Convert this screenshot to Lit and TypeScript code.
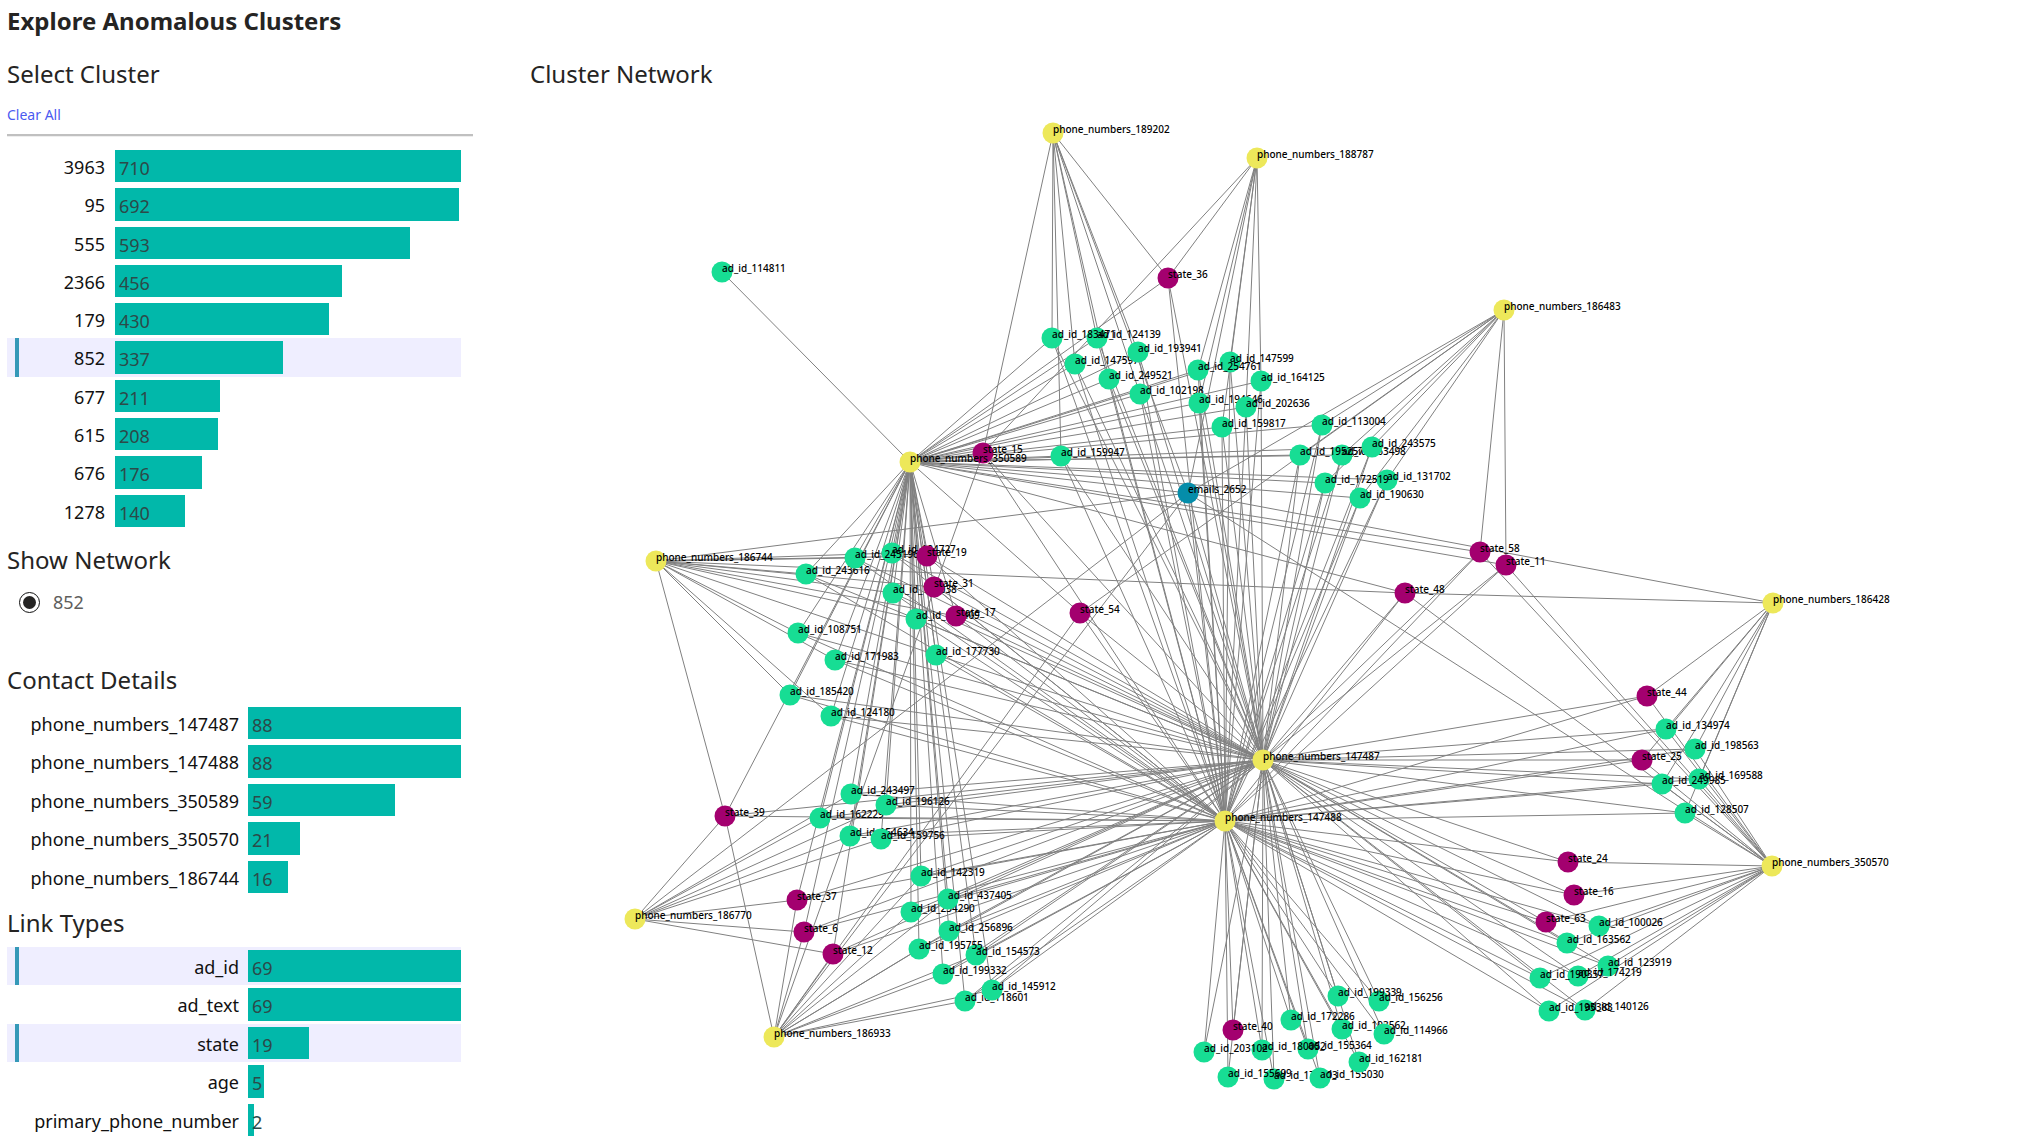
import { LitElement, html, svg, css } from "lit";
import { customElement, property, state } from "lit/decorators.js";
import { classMap } from "lit/directives/class-map.js";
import { styleMap } from "lit/directives/style-map.js";

type Bar = { label: string; value: number };
type Kind = "phone" | "ad" | "state" | "email";
type GraphNode = { id: string; kind: Kind; x: number; y: number };

const CLUSTERS: Bar[] = [
  { label: "3963", value: 710 },
  { label: "95", value: 692 },
  { label: "555", value: 593 },
  { label: "2366", value: 456 },
  { label: "179", value: 430 },
  { label: "852", value: 337 },
  { label: "677", value: 211 },
  { label: "615", value: 208 },
  { label: "676", value: 176 },
  { label: "1278", value: 140 },
];

const CONTACTS: Bar[] = [
  { label: "phone_numbers_147487", value: 88 },
  { label: "phone_numbers_147488", value: 88 },
  { label: "phone_numbers_350589", value: 59 },
  { label: "phone_numbers_350570", value: 21 },
  { label: "phone_numbers_186744", value: 16 },
];

const LINK_TYPES: Bar[] = [
  { label: "ad_id", value: 69 },
  { label: "ad_text", value: 69 },
  { label: "state", value: 19 },
  { label: "age", value: 5 },
  { label: "primary_phone_number", value: 2 },
];

const PREFIX: Record<Kind, string> = {
  phone: "phone_numbers_",
  ad: "ad_id_",
  state: "state_",
  email: "emails_",
};

const make = (kind: Kind, rows: [string, number, number][]): GraphNode[] =>
  rows.map(([n, x, y]) => ({ id: PREFIX[kind] + n, kind, x, y }));

/* Ads are grouped by the contact they share; later nodes paint over earlier ones. */
const TOP_ADS = make("ad", [
  ["124139", 1097, 337],
  ["183471", 1052, 337],
  ["147597", 1075, 363],
  ["193941", 1138, 351],
  ["249521", 1109, 378],
  ["102198", 1140, 393],
  ["159947", 1061, 455],
]);
const TOP_RIGHT_ADS = make("ad", [
  ["147599", 1230, 361],
  ["254761", 1198, 369],
  ["164125", 1261, 380],
  ["194646", 1199, 402],
  ["202636", 1246, 406],
  ["159817", 1222, 426],
]);
const EAST_ADS = make("ad", [
  ["113004", 1322, 424],
  ["163498", 1342, 454],
  ["195257", 1300, 454],
  ["243575", 1372, 446],
  ["131702", 1387, 479],
  ["172519", 1325, 482],
  ["190630", 1360, 497],
]);
const WEST_ADS = make("ad", [
  ["243616", 806, 573],
  ["184727", 892, 552],
  ["245196", 855, 557],
  ["179038", 893, 592],
  ["162409", 916, 618],
  ["108751", 798, 632],
  ["171983", 835, 659],
  ["177730", 936, 654],
  ["185420", 790, 694],
  ["124180", 831, 715],
]);
const SOUTHWEST_ADS = make("ad", [
  ["243497", 851, 793],
  ["162229", 820, 817],
  ["196126", 886, 804],
  ["154634", 850, 835],
  ["159756", 881, 838],
]);
const LOWER_ADS = make("ad", [
  ["142319", 921, 875],
  ["234290", 911, 911],
  ["437405", 948, 898],
  ["256896", 949, 930],
  ["154573", 976, 954],
  ["195755", 919, 948],
  ["199332", 943, 973],
  ["118601", 965, 1000],
  ["145912", 992, 989],
]);
const SOUTH_ADS = make("ad", [
  ["156256", 1379, 1000],
  ["199339", 1338, 995],
  ["193562", 1342, 1028],
  ["172286", 1291, 1019],
  ["114966", 1384, 1033],
  ["155364", 1308, 1048],
  ["180052", 1262, 1049],
  ["203102", 1204, 1051],
  ["174593", 1274, 1078],
  ["155699", 1228, 1076],
  ["155030", 1320, 1077],
  ["162181", 1359, 1061],
]);
const FAR_EAST_ADS = make("ad", [
  ["134974", 1666, 728],
  ["198563", 1695, 748],
  ["169588", 1699, 778],
  ["249985", 1662, 783],
  ["128507", 1685, 812],
]);
const SOUTHEAST_ADS = make("ad", [
  ["100026", 1599, 925],
  ["163562", 1567, 942],
  ["123919", 1608, 965],
  ["174219", 1578, 975],
  ["190357", 1540, 977],
  ["140126", 1585, 1009],
  ["195383", 1549, 1010],
]);
const LONE_ADS = make("ad", [["114811", 722, 271]]);

const STATES = make("state", [
  ["36", 1168, 277],
  ["15", 983, 452],
  ["19", 927, 555],
  ["31", 934, 586],
  ["17", 956, 615],
  ["54", 1080, 612],
  ["58", 1480, 551],
  ["11", 1506, 564],
  ["48", 1405, 592],
  ["44", 1647, 695],
  ["25", 1642, 759],
  ["24", 1568, 861],
  ["16", 1574, 894],
  ["63", 1546, 921],
  ["40", 1233, 1029],
  ["39", 725, 815],
  ["37", 797, 899],
  ["6", 804, 931],
  ["12", 833, 953],
]);
const EMAILS = make("email", [["2652", 1188, 492]]);
const PHONES = make("phone", [
  ["189202", 1053, 132],
  ["188787", 1257, 157],
  ["186483", 1504, 309],
  ["350589", 910, 461],
  ["186744", 656, 560],
  ["186428", 1773, 602],
  ["147487", 1263, 759],
  ["147488", 1225, 820],
  ["350570", 1772, 865],
  ["186770", 635, 918],
  ["186933", 774, 1036],
]);

const LINKED_ADS = [
  ...TOP_ADS,
  ...TOP_RIGHT_ADS,
  ...EAST_ADS,
  ...WEST_ADS,
  ...SOUTHWEST_ADS,
  ...LOWER_ADS,
  ...SOUTH_ADS,
  ...FAR_EAST_ADS,
  ...SOUTHEAST_ADS,
];
const NODES = [...LONE_ADS, ...LINKED_ADS, ...STATES, ...EMAILS, ...PHONES];

const states = (...ids: number[]) =>
  STATES.filter((s) => ids.includes(Number(s.id.slice(PREFIX.state.length))));

const LINKS: Record<string, GraphNode[]> = {
  "147487": [...LINKED_ADS, ...STATES, ...EMAILS],
  "147488": [...LINKED_ADS, ...STATES, ...EMAILS],
  "350589": [
    ...LONE_ADS,
    ...TOP_ADS,
    ...TOP_RIGHT_ADS,
    ...EAST_ADS,
    ...WEST_ADS,
    ...SOUTHWEST_ADS,
    ...LOWER_ADS,
    ...states(15, 36, 54, 19, 31, 17, 39, 37, 6, 12, 58, 11, 48),
    ...EMAILS,
  ],
  "350570": [
    ...FAR_EAST_ADS,
    ...SOUTHEAST_ADS,
    ...states(44, 25, 24, 16, 63, 58, 11, 48),
    ...EMAILS,
  ],
  "186744": [...WEST_ADS, ...states(19, 31, 17, 39, 48), ...EMAILS],
  "186428": [...FAR_EAST_ADS, ...states(44, 25, 48), ...EMAILS],
  "186483": [...EAST_ADS, ...states(58, 11, 54), ...EMAILS],
  "189202": [...TOP_ADS, ...states(15, 36), ...EMAILS],
  "188787": [...TOP_RIGHT_ADS, ...states(15, 36), ...EMAILS],
  "186770": [...SOUTHWEST_ADS, ...states(39, 37, 6, 12), ...EMAILS],
  "186933": [...LOWER_ADS, ...states(39, 37, 6, 12, 54, 15), ...EMAILS],
};

@customElement("bar-chart")
export class BarChart extends LitElement {
  @property({ attribute: false }) bars: Bar[] = [];
  @property({ attribute: false }) selected: string[] = [];
  @property({ type: Number }) max = 100;
  @property({ type: Boolean, reflect: true }) wide = false;

  static styles = css`
    :host {
      display: block;
      margin-right: 12px;
    }
    .rows {
      display: flex;
      flex-direction: column;
      height: 383px;
      margin: 0;
      padding: 0;
      list-style: none;
    }
    :host([wide]) .rows {
      height: 192px;
    }
    .item {
      display: flex;
      flex: 1;
      min-height: 0;
    }
    .row {
      display: grid;
      grid-template-columns: 98px 1fr;
      column-gap: 10px;
      flex: 1;
      margin: 0;
      padding: 3px 0;
      border: 0;
      background: none;
      font: inherit;
      font-size: 18px;
      line-height: 28px;
      text-align: left;
      cursor: pointer;
    }
    :host([wide]) .row {
      grid-template-columns: 232px 1fr;
      column-gap: 9px;
    }
    .selected {
      background:
        linear-gradient(#3599b8, #3599b8) 8px 0 / 4px 100% no-repeat,
        #efeeff;
    }
    .label {
      padding-top: 3px;
      color: #111;
      text-align: right;
      white-space: nowrap;
    }
    .track {
      display: flex;
      align-items: stretch;
      min-width: 0;
    }
    .bar {
      box-sizing: border-box;
      padding-top: 4px;
      background: #01b8aa;
      color: #2c4a49;
      white-space: nowrap;
    }
    .value {
      padding-left: 4px;
    }
  `;

  private pick(label: string) {
    this.dispatchEvent(new CustomEvent("pick", { detail: label }));
  }

  render() {
    return html`<ul class="rows">
      ${this.bars.map((b) => {
        const on = this.selected.includes(b.label);
        const width = `${Math.min(100, (b.value / this.max) * 100)}%`;
        return html`<li class="item">
          <button
            type="button"
            class=${classMap({ row: true, selected: on })}
            aria-pressed=${on ? "true" : "false"}
            @click=${() => this.pick(b.label)}
          >
            <span class="label">${b.label}</span>
            <span class="track"
              ><span class="bar" style=${styleMap({ width })}
                ><span class="value">${b.value}</span></span
              ></span
            >
          </button>
        </li>`;
      })}
    </ul>`;
  }
}

@customElement("network-graph")
export class NetworkGraph extends LitElement {
  static styles = css`
    :host {
      display: block;
    }
    .graph {
      display: block;
      width: 100%;
      height: auto;
    }
    .edge {
      stroke: #808080;
      stroke-width: 1;
    }
    .phone {
      fill: #ede85a;
    }
    .ad {
      fill: #17dd94;
    }
    .state {
      fill: #a3006f;
    }
    .email {
      fill: #058daa;
    }
    .name {
      fill: #000;
      font-size: 10px;
      font-weight: 500;
    }
  `;

  render() {
    return html`<svg
      class="graph"
      viewBox="530 103 1500 1030"
      role="img"
      aria-label="Cluster Network"
    >
      ${PHONES.map((p) =>
        LINKS[p.id.slice(PREFIX.phone.length)].map(
          (n) => svg`<line class="edge" x1=${p.x} y1=${p.y} x2=${n.x} y2=${n.y}></line>`,
        ),
      )}
      ${NODES.map(
        (n) => svg`<g>
          <circle class=${n.kind} cx=${n.x} cy=${n.y} r="10.5"></circle>
          <text class="name" x=${n.x} y=${n.y}>${n.id}</text>
        </g>`,
      )}
    </svg>`;
  }
}

@customElement("app-root")
export class AppRoot extends LitElement {
  @state() private clusters: string[] = ["852"];
  @state() private types: string[] = ["ad_id", "state"];
  @state() private contacts: string[] = [];

  static styles = css`
    :host {
      display: block;
      min-height: 100vh;
      background: #fff;
      color: #252423;
      font-family: "Segoe UI", "Noto Sans", "Open Sans", sans-serif;
    }
    .page {
      display: grid;
      grid-template-columns: 466fr 1500fr;
      column-gap: 57px;
      padding: 5px 10px 4px 7px;
    }
    .title {
      grid-column: 1 / -1;
      margin: 0 0 21px;
      font-size: 24px;
      font-weight: 700;
      line-height: 32px;
    }
    .heading {
      margin: 0;
      font-size: 24px;
      font-weight: 400;
      line-height: 32px;
    }
    .clear {
      display: block;
      margin: 15px 0 9px;
      padding: 0;
      border: 0;
      background: none;
      color: #4a5af0;
      font: inherit;
      font-size: 14px;
      line-height: 20px;
      cursor: pointer;
    }
    .rule {
      height: 0;
      margin: 0 0 10px;
      border: 0;
      border-top: 2px solid #c0c0c0;
      border-bottom: 1px solid #eee;
    }
    .network {
      margin-top: 14px;
    }
    .contact {
      margin-top: 50px;
    }
    .types {
      margin-top: 11px;
    }
    .chart {
      margin-top: 8px;
    }
    .option {
      display: flex;
      align-items: center;
      gap: 13px;
      margin: 14px 0 0 12px;
      color: #605e5c;
      font-size: 18px;
      line-height: 24px;
    }
    .radio {
      appearance: none;
      box-sizing: border-box;
      width: 21px;
      height: 21px;
      margin: 0;
      padding: 3px;
      border: 1px solid #111;
      border-radius: 50%;
    }
    .radio:checked {
      background: #252423 content-box;
    }
    .graph {
      margin-top: 14px;
    }
  `;

  private toggle(list: string[], label: string) {
    return list.includes(label) ? list.filter((l) => l !== label) : [...list, label];
  }

  render() {
    return html`<main class="page">
      <h1 class="title">Explore Anomalous Clusters</h1>
      <div>
        <section>
          <h2 class="heading">Select Cluster</h2>
          <button type="button" class="clear" @click=${() => (this.clusters = [])}>Clear All</button>
          <hr class="rule" />
          <bar-chart
            .bars=${CLUSTERS}
            .selected=${this.clusters}
            .max=${696}
            @pick=${(e: CustomEvent) => (this.clusters = this.toggle(this.clusters, e.detail))}
          ></bar-chart>
        </section>
        <section class="network">
          <h2 class="heading">Show Network</h2>
          <label class="option">
            <input class="radio" type="radio" name="network" value="852" checked />
            852
          </label>
        </section>
        <section class="contact">
          <h2 class="heading">Contact Details</h2>
          <bar-chart
            class="chart"
            wide
            .bars=${CONTACTS}
            .selected=${this.contacts}
            .max=${85.5}
            @pick=${(e: CustomEvent) => (this.contacts = this.toggle(this.contacts, e.detail))}
          ></bar-chart>
        </section>
        <section class="types">
          <h2 class="heading">Link Types</h2>
          <bar-chart
            class="chart"
            wide
            .bars=${LINK_TYPES}
            .selected=${this.types}
            .max=${66.5}
            @pick=${(e: CustomEvent) => (this.types = this.toggle(this.types, e.detail))}
          ></bar-chart>
        </section>
      </div>
      <section>
        <h2 class="heading">Cluster Network</h2>
        <network-graph class="graph"></network-graph>
      </section>
    </main>`;
  }
}
